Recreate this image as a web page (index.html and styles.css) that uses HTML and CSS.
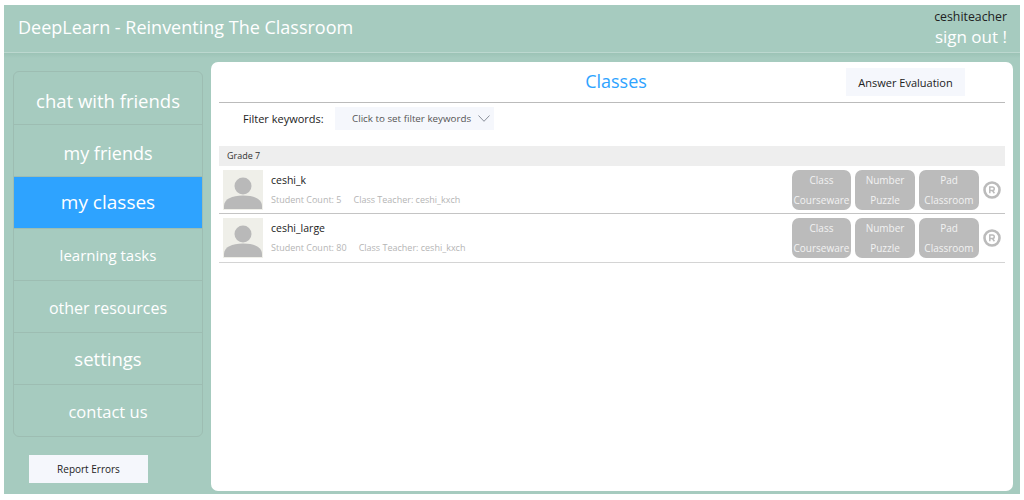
FILE: index.html
```html
<!DOCTYPE html>
<html lang="en">
<head>
<meta charset="utf-8">
<title>DeepLearn</title>
<link rel="stylesheet" href="styles.css">
</head>
<body>
<div class="app">
  <header class="topbar">
    <div class="brand">DeepLearn - Reinventing The Classroom</div>
    <div class="account">
      <div class="username">ceshiteacher</div>
      <div class="signout">sign out !</div>
    </div>
  </header>
  <div class="body">
    <aside class="side">
      <nav class="menu">
        <a class="item low chat">chat with friends</a>
        <a class="item low friends">my friends</a>
        <a class="item active classes">my classes</a>
        <a class="item tasks">learning tasks</a>
        <a class="item resources">other resources</a>
        <a class="item settings">settings</a>
        <a class="item contact">contact us</a>
      </nav>
      <button class="report">Report Errors</button>
    </aside>
    <main class="panel">
      <div class="title-row">
        <h1 class="title">Classes</h1>
        <button class="answer">Answer Evaluation</button>
      </div>
      <div class="filter-row">
        <span class="filter-label">Filter keywords:</span>
        <div class="select">
          <span>Click to set filter keywords</span>
          <svg class="chev" viewBox="0 0 12 7" width="12" height="7"><path d="M.5.5 6 6.3 11.5.5" fill="none" stroke="#8a8f99" stroke-width="1"/></svg>
        </div>
      </div>
      <div class="grade">Grade 7</div>
      <div class="row">
        <svg class="avatar" viewBox="0 0 40 40"><rect width="40" height="40" fill="#efefe9"/><circle cx="20" cy="16" r="8.5" fill="#b9b9b9"/><path d="M1 39v-3c0-7 8-10.500 19-10.500S39 29 39 36v3z" fill="#b9b9b9"/></svg>
        <div class="info">
          <div class="name">ceshi_k</div>
          <div class="meta"><span>Student Count: 5</span><span>Class Teacher: ceshi_kxch</span></div>
        </div>
        <div class="actions">
          <button class="act">Class<br>Courseware</button>
          <button class="act">Number<br>Puzzle</button>
          <button class="act">Pad<br>Classroom</button>
          <svg class="reg" viewBox="0 0 18 18"><circle cx="9" cy="9" r="7.500" fill="none" stroke="#bbb" stroke-width="2.600"/><path d="M6.800 12.200V6h2.700a1.700 1.700 0 0 1 0 3.500H6.800M9.400 9.500l2 2.700" fill="none" stroke="#bbb" stroke-width="1.500"/></svg>
        </div>
      </div>
      <div class="row">
        <svg class="avatar" viewBox="0 0 40 40"><rect width="40" height="40" fill="#efefe9"/><circle cx="20" cy="16" r="8.5" fill="#b9b9b9"/><path d="M1 39v-3c0-7 8-10.500 19-10.500S39 29 39 36v3z" fill="#b9b9b9"/></svg>
        <div class="info">
          <div class="name">ceshi_large</div>
          <div class="meta"><span>Student Count: 80</span><span>Class Teacher: ceshi_kxch</span></div>
        </div>
        <div class="actions">
          <button class="act">Class<br>Courseware</button>
          <button class="act">Number<br>Puzzle</button>
          <button class="act">Pad<br>Classroom</button>
          <svg class="reg" viewBox="0 0 18 18"><circle cx="9" cy="9" r="7.500" fill="none" stroke="#bbb" stroke-width="2.600"/><path d="M6.800 12.200V6h2.700a1.700 1.700 0 0 1 0 3.500H6.800M9.400 9.500l2 2.700" fill="none" stroke="#bbb" stroke-width="1.500"/></svg>
        </div>
      </div>
    </main>
  </div>
</div>
</body>
</html>
```
FILE: styles.css
```css
* { box-sizing: border-box; }
html, body { margin: 0; height: 100%; background: #fff; }
body {
  padding: 5px 4px 6px 4px;
  font-family: "Open Sans", "Liberation Sans", sans-serif;
  overflow: hidden;
}
.app {
  height: 489px;
  background: #a6cbbf;
  display: flex;
  flex-direction: column;
}
.topbar {
  height: 48px;
  flex: none;
  border-bottom: 1px solid #bcd8cf;
  display: flex;
  justify-content: space-between;
  padding: 0 13px 0 14px;
  color: #fff;
}
.brand { font-size: 18px; line-height: 44px; }
.account { text-align: right; }
.username { font-size: 12.300px; line-height: 14px; padding-top: 5px; color: #222; }
.signout { font-size: 17px; line-height: 22px; padding-top: 2px; }
.body {
  flex: 1;
  display: flex;
  padding: 9px 7px 3px 9px;
  gap: 8px;
  background: linear-gradient(#9cc3b6, #a6cbbf 5px);
}
.side { width: 190px; flex: none; padding-top: 9px; }
.menu {
  border: 1px solid #9dbdb2;
  border-radius: 6px;
  overflow: hidden;
  display: grid;
  grid-auto-rows: 1fr;
  height: 366px;
}
.item {
  display: flex;
  align-items: center;
  justify-content: center;
  color: #fff;
  font-size: 18px;
  border-top: 1px solid #9dbdb2;
}
.item:first-child { border-top: 0; }
.item.low { padding-top: 4px; }
.item.active { background: #2ea3ff; }
.chat { font-size: 18.500px; }
.friends { font-size: 18px; }
.classes { font-size: 19px; padding-bottom: 1px; }
.tasks { font-size: 15px; }
.resources { font-size: 16px; padding-top: 2px; }
.settings { font-size: 18.500px; }
.contact { font-size: 16.500px; padding-top: 2px; }
.report {
  display: block;
  width: 119px;
  height: 28px;
  margin: 18px 0 0 16px;
  border: 0;
  background: #f5f7fc;
  color: #222;
  font: 10px "Open Sans", sans-serif;
}
.panel {
  flex: 1;
  background: #fff;
  border-radius: 7px;
  padding: 0 8px;
}
.title-row {
  position: relative;
  height: 41px;
  border-bottom: 1px solid #bbb;
  display: flex;
  align-items: center;
  justify-content: center;
  padding: 0 0 2px 8px;
}
.title { margin: 0; font-size: 18px; font-weight: 400; color: #2ea3ff; }
.answer {
  position: absolute;
  right: 40px;
  top: 6px;
  width: 119px;
  height: 28px;
  border: 0;
  background: #f5f7fc;
  color: #222;
  font: 11px "Open Sans", sans-serif;
}
.filter-row {
  display: flex;
  align-items: center;
  height: 43px;
  padding: 0 0 13px 24px;
}
.filter-label { width: 92px; font-size: 11px; color: #222; }
.select {
  width: 159px;
  height: 23px;
  background: #f5f7fc;
  display: flex;
  align-items: center;
  padding-left: 17px;
  gap: 7px;
  font-size: 9.800px;
  color: #555;
  white-space: nowrap;
}
.chev { flex: none; }
.grade {
  height: 20px;
  background: #eee;
  font-size: 9px;
  line-height: 19px;
  padding-left: 8px;
  color: #333;
}
.row {
  height: 48px;
  border-bottom: 1px solid #c4c4c4;
  display: flex;
  align-items: center;
  padding: 0 4px;
}
.row:last-child { height: 49px; border-bottom-color: #d4d4d4; padding-bottom: 1px; }
.avatar { width: 40px; height: 40px; flex: none; }
.info { margin-left: 8px; flex: 1; }
.name { font-size: 10.500px; line-height: 14px; color: #222; margin-bottom: 6px; }
.meta { font-size: 9px; line-height: 14px; color: #b5b5b5; display: flex; gap: 12px; }
.actions { display: flex; align-items: center; gap: 4px; }
.act {
  width: 60px;
  height: 40px;
  border: 0;
  border-radius: 7px;
  background: #bbb;
  color: #f2f2f2;
  padding: 0;
  font: 10px/20px "Open Sans", sans-serif;
  white-space: nowrap;
}
.act:first-child { width: 59px; }
.reg { width: 18px; height: 18px; flex: none; }
```
